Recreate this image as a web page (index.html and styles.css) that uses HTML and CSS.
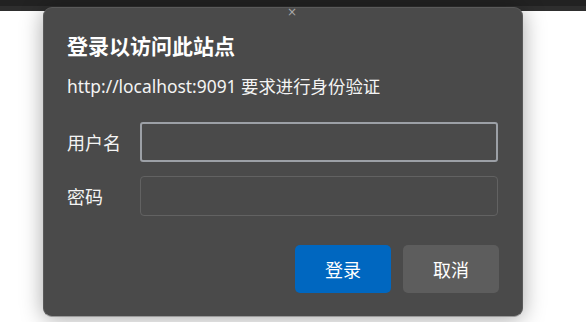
FILE: index.html
```html
<!DOCTYPE html>
<html lang="zh-CN">
<head>
<meta charset="utf-8">
<link rel="stylesheet" href="styles.css">
</head>
<body>
<div class="topbar"><div class="band1"></div><div class="band2"></div></div>
<div class="dialog">
  <div class="close">×</div>
  <h1 class="title">登录以访问此站点</h1>
  <p class="subtitle">http://localhost:9091 要求进行身份验证</p>
  <div class="form">
    <label class="label">用户名</label>
    <div class="input focused"></div>
    <label class="label">密码</label>
    <div class="input"></div>
  </div>
  <div class="actions">
    <button class="btn primary">登录</button>
    <button class="btn secondary">取消</button>
  </div>
</div>
</body>
</html>
```
FILE: styles.css
```css
html, body {
  margin: 0;
  padding: 0;
  background: #ffffff;
  width: 586px;
  height: 322px;
  overflow: hidden;
  font-family: "Noto Sans", "Noto Sans CJK SC", sans-serif;
}
.topbar .band1 { height: 6px; background: #222222; }
.topbar .band2 { height: 5px; background: #2e2e2e; }

.dialog {
  position: absolute;
  left: 43px;
  top: 7px;
  width: 480px;
  height: 310px;
  box-sizing: border-box;
  background: #4a4a4a;
  border-radius: 9px;
  border: 1px solid #5a5a5a;
  border-bottom-color: #9a9a9a;
  box-shadow: 0 2px 22px rgba(0,0,0,0.35);
  padding: 23px 23px 23px 23px;
  color: #ffffff;
  display: flex;
  flex-direction: column;
}
.close {
  position: absolute;
  top: -3px;
  left: 243px;
  font-size: 12px;
  line-height: 14px;
  color: #a8a8a8;
  font-family: "DejaVu Sans", sans-serif;
}
.title {
  margin: 0;
  font-size: 21px;
  line-height: 28px;
  font-weight: 700;
  font-family: "Noto Sans CJK SC", sans-serif;
}
.subtitle {
  margin: 14px 0 0 0;
  font-size: 17.4px;
  line-height: 26px;
  color: #f4f4f4;
}
.form {
  margin-top: 23px;
  display: grid;
  grid-template-columns: 73px 358px;
  grid-auto-rows: 40px;
  row-gap: 14px;
  align-items: center;
}
.label {
  font-size: 18px;
  font-family: "Noto Sans CJK SC", sans-serif;
  color: #f4f4f4;
}
.input {
  height: 40px;
  box-sizing: border-box;
  border: 1px solid #626262;
  border-radius: 4px;
  background: #4a4a4a;
}
.input.focused {
  border: 2px solid #9ca0a6;
  border-radius: 3px;
}
.actions {
  margin-top: 29px;
  display: flex;
  justify-content: flex-end;
  gap: 12px;
}
.btn {
  width: 96px;
  height: 48px;
  border: none;
  border-radius: 5px;
  color: #ffffff;
  font-size: 18px;
  font-family: "Noto Sans CJK SC", sans-serif;
  padding: 0;
}
.btn.primary { background: #0067c0; }
.btn.secondary { background: #5d5d5d; }
```
